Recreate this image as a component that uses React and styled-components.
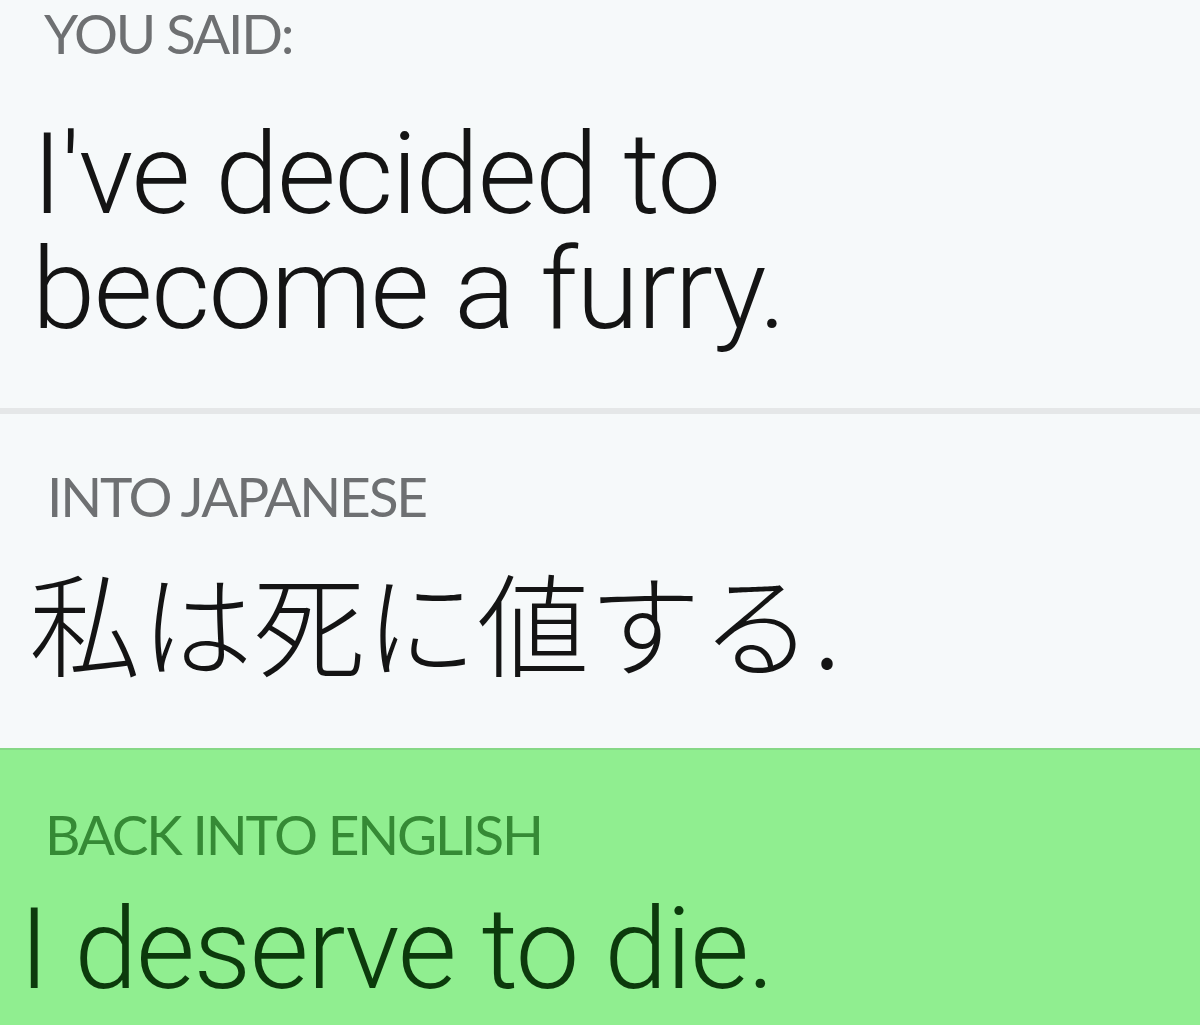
import React from "react";
import styled, { createGlobalStyle } from "styled-components";

const GlobalStyle = createGlobalStyle`
  html, body {
    margin: 0;
    padding: 0;
    background: #f6f9fa;
  }
  body {
    font-family: Roboto, "Liberation Sans", Arial, sans-serif;
  }
`;

const Screen = styled.div`
  width: 1200px;
  height: 1025px;
  overflow: hidden;
  display: flex;
  flex-direction: column;
`;

const Section = styled.section`
  background: ${(p) => (p.$green ? "#90ee90" : "#f6f9fa")};
  height: ${(p) => p.$h}px;
  box-sizing: border-box;
  padding-top: ${(p) => p.$pad}px;
  border-bottom: ${(p) => (p.$divider ? "6px solid #e5e7e8" : "none")};
  border-top: ${(p) => (p.$green ? "2px solid #86d886" : "none")};
  flex-shrink: 0;
`;

const Label = styled.div`
  font-family: Lato, "Liberation Sans", sans-serif;
  font-weight: 400;
  font-size: 55px;
  line-height: 1;
  letter-spacing: -2.2px;
  color: ${(p) => (p.$green ? "#358a35" : "#6e7072")};
  margin-left: ${(p) => p.$indent}px;
`;

const Phrase = styled.div`
  font-family: Roboto, "Liberation Sans", Arial, sans-serif;
  font-weight: 300;
  font-size: 114px;
  line-height: 115px;
  letter-spacing: -1.5px;
  color: ${(p) => (p.$green ? "#0c3a0c" : "#141414")};
  margin-left: ${(p) => p.$indent}px;
  margin-top: ${(p) => p.$top}px;
`;

const JapanesePhrase = styled.div`
  font-family: "Noto Sans CJK JP", sans-serif;
  font-weight: 300;
  font-size: 112px;
  line-height: 1;
  color: #141414;
  margin-left: 29px;
  margin-top: 40px;
`;

export default function App() {
  return (
    <>
      <GlobalStyle />
      <Screen>
        <Section $h={414} $pad={6} $divider>
          <Label $indent={44}>YOU SAID:</Label>
          <Phrase $indent={32} $top={56}>
            I've decided to
            <br />
            become a furry.
          </Phrase>
        </Section>
        <Section $h={334} $pad={55}>
          <Label $indent={47}>INTO JAPANESE</Label>
          <JapanesePhrase>私は死に値する.</JapanesePhrase>
        </Section>
        <Section $h={277} $pad={57} $green>
          <Label $indent={45} $green>
            BACK INTO ENGLISH
          </Label>
          <Phrase $indent={19} $top={30} $green>
            I deserve to die.
          </Phrase>
        </Section>
      </Screen>
    </>
  );
}
